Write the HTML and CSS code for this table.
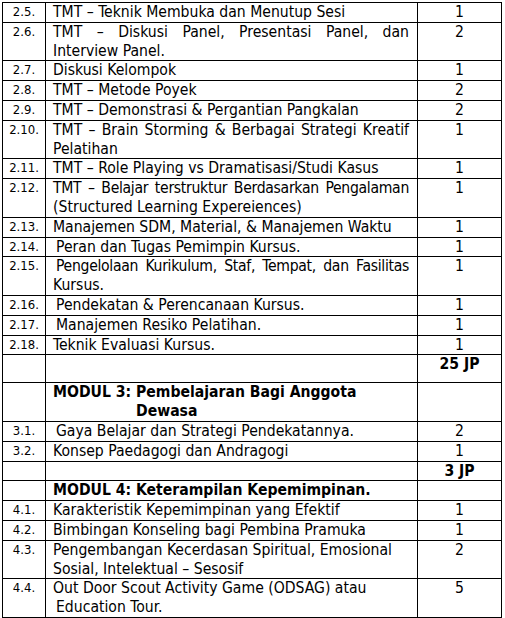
FILE: index.html
```html
<!DOCTYPE html>
<html lang="id">
<head>
<meta charset="utf-8">
<title>Materi Kursus</title>
<link rel="stylesheet" href="styles.css">
</head>
<body>
<div class="page">
<table class="grid">
  <colgroup>
    <col class="c-no">
    <col class="c-txt">
    <col class="c-jp">
  </colgroup>
  <tbody>
    <tr><td class="no">2.5.</td><td class="txt">TMT – Teknik Membuka dan Menutup Sesi</td><td class="jp">1</td></tr>
    <tr><td class="no">2.6.</td><td class="txt"><span class="jl">TMT – Diskusi Panel, Presentasi Panel, dan</span>Interview Panel.</td><td class="jp">2</td></tr>
    <tr><td class="no">2.7.</td><td class="txt">Diskusi Kelompok</td><td class="jp">1</td></tr>
    <tr><td class="no">2.8.</td><td class="txt">TMT – Metode Poyek</td><td class="jp">2</td></tr>
    <tr><td class="no">2.9.</td><td class="txt">TMT – Demonstrasi &amp; Pergantian Pangkalan</td><td class="jp">2</td></tr>
    <tr><td class="no">2.10.</td><td class="txt"><span class="jl">TMT – Brain Storming &amp; Berbagai Strategi Kreatif</span>Pelatihan</td><td class="jp">1</td></tr>
    <tr><td class="no">2.11.</td><td class="txt">TMT – Role Playing vs Dramatisasi/Studi Kasus</td><td class="jp">1</td></tr>
    <tr><td class="no">2.12.</td><td class="txt"><span class="jl tight">TMT – Belajar terstruktur Berdasarkan Pengalaman</span>(Structured Learning Expereiences)</td><td class="jp">1</td></tr>
    <tr><td class="no">2.13.</td><td class="txt">Manajemen SDM, Material, &amp; Manajemen Waktu</td><td class="jp">1</td></tr>
    <tr><td class="no">2.14.</td><td class="txt ind">Peran dan Tugas Pemimpin Kursus.</td><td class="jp">1</td></tr>
    <tr><td class="no">2.15.</td><td class="txt ind"><span class="jl tight">Pengelolaan Kurikulum, Staf, Tempat, dan Fasilitas</span>Kursus.</td><td class="jp">1</td></tr>
    <tr><td class="no">2.16.</td><td class="txt ind">Pendekatan &amp; Perencanaan Kursus.</td><td class="jp">1</td></tr>
    <tr><td class="no">2.17.</td><td class="txt ind">Manajemen Resiko Pelatihan.</td><td class="jp">1</td></tr>
    <tr><td class="no">2.18.</td><td class="txt">Teknik Evaluasi Kursus.</td><td class="jp">1</td></tr>
    <tr class="total-tall"><td class="no"></td><td class="txt"></td><td class="jp strong">25 JP</td></tr>
    <tr><td class="no"></td><td class="txt strong"><div class="hang">MODUL 3: Pembelajaran Bagi Anggota<br>Dewasa</div></td><td class="jp"></td></tr>
    <tr><td class="no">3.1.</td><td class="txt ind">Gaya Belajar dan Strategi Pendekatannya.</td><td class="jp">2</td></tr>
    <tr><td class="no">3.2.</td><td class="txt">Konsep Paedagogi dan Andragogi</td><td class="jp">1</td></tr>
    <tr><td class="no"></td><td class="txt"></td><td class="jp strong">3 JP</td></tr>
    <tr><td class="no"></td><td class="txt strong">MODUL 4: Keterampilan Kepemimpinan.</td><td class="jp"></td></tr>
    <tr><td class="no">4.1.</td><td class="txt">Karakteristik Kepemimpinan yang Efektif</td><td class="jp">1</td></tr>
    <tr><td class="no">4.2.</td><td class="txt">Bimbingan Konseling bagi Pembina Pramuka</td><td class="jp">1</td></tr>
    <tr><td class="no">4.3.</td><td class="txt">Pengembangan Kecerdasan Spiritual, Emosional<br>Sosial, Intelektual – Sesosif</td><td class="jp">2</td></tr>
    <tr><td class="no">4.4.</td><td class="txt">Out Door Scout Activity Game (ODSAG) atau<br><span class="ind2">Education Tour.</span></td><td class="jp">5</td></tr>
    <tr><td class="no">&nbsp;</td><td class="txt">&nbsp;</td><td class="jp">&nbsp;</td></tr>
  </tbody>
</table>
</div>
</body>
</html>
```

FILE: styles.css
```css
html, body {
  margin: 0;
  padding: 0;
  background: #ffffff;
}

.page {
  padding: 2px 0 0 2px;
  font-family: "DejaVu Sans Condensed", "DejaVu Sans", sans-serif;
  font-stretch: condensed;
  color: #000000;
}

.grid {
  border-collapse: collapse;
  table-layout: fixed;
  width: 499px;
}

.c-no { width: 43px; }
.c-txt { width: 372px; }
.c-jp { width: 84px; }

.grid td {
  border: 1px solid #000000;
  padding: 0;
  vertical-align: top;
  font-size: 15.6px;
  line-height: 18.8px;
}

.grid td.no {
  text-align: center;
  font-size: 13px;
  line-height: 17.5px;
}

.grid td.txt {
  padding: 0 8px 0 7px;
  text-align: left;
}

.grid td.ind {
  text-indent: 3px;
}

.ind2 {
  display: inline-block;
  padding-left: 3px;
}

.jl {
  display: block;
  white-space: nowrap;
  text-align: justify;
  text-align-last: justify;
}

.tight {
  letter-spacing: -0.3px;
}

.grid td.jp {
  text-align: center;
}

.strong {
  font-weight: bold;
}

.total-tall td {
  height: 27px;
}

.hang {
  padding-left: 83px;
  text-indent: -83px;
}
```
